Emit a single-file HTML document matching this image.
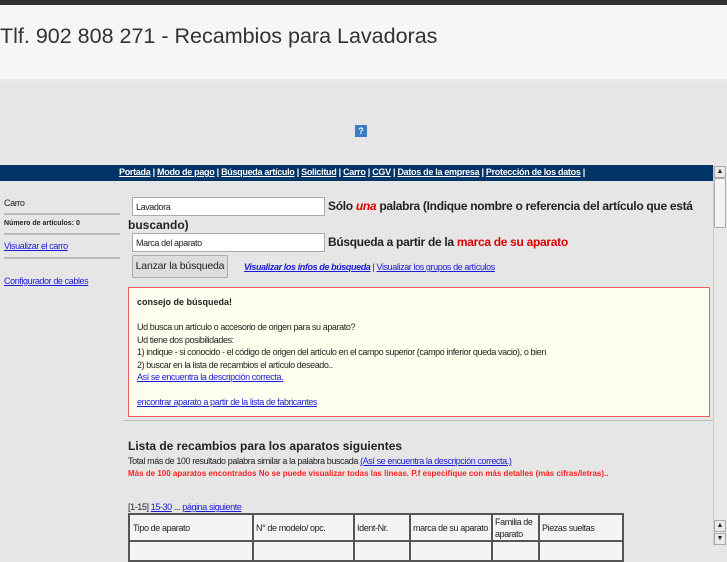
<!DOCTYPE html>
<html><head><meta charset="utf-8"><style>
*{margin:0;padding:0;box-sizing:border-box}
body{width:727px;height:545px;overflow:hidden;background:#e6e6e6;font-family:"Liberation Sans",sans-serif;color:#222;position:relative}
.a{position:absolute}
a{color:#1a1ad8;text-decoration:underline}
.s{font-size:9px;letter-spacing:-0.4px}
td{white-space:nowrap;overflow:hidden}
</style></head><body>
<div class="a" style="left:0;top:0;width:727px;height:5px;background:#333"></div>
<div class="a" style="left:0;top:5px;width:727px;height:76px;background:#f6f6f6;border-bottom:2px solid #ececec"></div>
<div class="a" style="left:0;top:24px;font-size:21.5px;color:#333">Tlf. 902 808 271 - Recambios para Lavadoras</div>
<div class="a" style="left:355px;top:125px;width:12px;height:12px;background:#3a7cc8;color:#fff;font-size:9px;text-align:center;line-height:12px;font-weight:bold">?</div>
<div class="a" style="left:0;top:165px;width:713px;height:16px;background:#003366"></div>
<div class="a" style="left:119px;top:167px;font-size:9px;color:#fff;font-weight:bold;letter-spacing:-0.3px;white-space:nowrap">
<a style="color:#fff">Portada</a> | <a style="color:#fff">Modo de pago</a> | <a style="color:#fff">Búsqueda artículo</a> | <a style="color:#fff">Solicitud</a> | <a style="color:#fff">Carro</a> | <a style="color:#fff">CGV</a> | <a style="color:#fff">Datos de la empresa</a> | <a style="color:#fff">Protección de los datos</a> |</div>
<div class="a" style="left:713px;top:165px;width:14px;height:380px;background:#e8e8e8;border-left:1px solid #ccc"></div>
<div class="a" style="left:714px;top:178px;width:12px;height:50px;background:#f4f4f4;border:1px solid #aaa;border-radius:2px"></div>
<div class="a" style="left:714px;top:166px;width:12px;height:12px;border:1px solid #aaa;font-size:7px;text-align:center;line-height:10px">▲</div>
<div class="a" style="left:714px;top:520px;width:12px;height:12px;border:1px solid #aaa;font-size:7px;text-align:center;line-height:10px">▲</div>
<div class="a" style="left:714px;top:533px;width:12px;height:12px;border:1px solid #aaa;font-size:7px;text-align:center;line-height:10px">▼</div>
<div class="a s" style="left:4px;top:198px;font-size:9px">Carro</div>
<div class="a" style="left:4px;top:213px;width:116px;height:2px;background:#bbb"></div>
<div class="a" style="left:4px;top:220px;font-size:7px;font-weight:bold">Número de artículos: 0</div>
<div class="a" style="left:4px;top:233px;width:116px;height:2px;background:#bbb"></div>
<div class="a s" style="left:4px;top:241px"><a>Visualizar el carro</a></div>
<div class="a" style="left:4px;top:257px;width:116px;height:2px;background:#bbb"></div>
<div class="a s" style="left:4px;top:276px"><a>Configurador de cables </a></div>
<div class="a s" style="left:132px;top:197px;width:193px;height:19px;background:#fff;border:1px solid #aaa;padding:4px 3px;font-size:9px">Lavadora</div>
<div class="a" style="left:328px;top:197px;font-size:12px;font-weight:bold;width:385px;line-height:19px;letter-spacing:-0.3px;white-space:nowrap">Sólo <i style="color:#d00">una</i> palabra (Indique nombre o referencia del artículo que está</div>
<div class="a" style="left:128px;top:217px;font-size:12px;font-weight:bold;line-height:17px">buscando)</div>
<div class="a s" style="left:132px;top:233px;width:193px;height:19px;background:#fff;border:1px solid #aaa;padding:4px 3px;font-size:9px">Marca del aparato</div>
<div class="a" style="left:328px;top:235px;font-size:12px;font-weight:bold;letter-spacing:-0.3px;white-space:nowrap">Búsqueda a partir de la <span style="color:#d00">marca de su aparato</span></div>
<div class="a" style="left:132px;top:255px;width:96px;height:23px;background:#ddd;border:1px solid #aaa;border-radius:2px;font-size:10.5px;text-align:center;line-height:21px;white-space:nowrap;letter-spacing:-0.2px">Lanzar la búsqueda</div>
<div class="a s" style="left:244px;top:262px;white-space:nowrap"><a style="font-weight:bold;font-style:italic">Visualizar los infos de búsqueda</a> | <a>Visualizar los grupos de artículos</a></div>
<div class="a s" style="left:128px;top:287px;width:582px;height:130px;background:#fffff0;border:1px solid #f06060;padding:8px 8px;font-size:9px;line-height:12.5px">
<b style="letter-spacing:0">consejo de búsqueda!</b><br><br>
Ud busca un artículo o accesorio de origen para su aparato?<br>
Ud tiene dos posibilidades:<br>
1) indique - si conocido - el código de origen del artículo en el campo superior (campo inferior queda vacio), o bien<br>
2) buscar en la lista de recambios el artículo deseado..<br>
<a>Así se encuentra la descripción correcta.</a><br><br>
<a>encontrar aparato a partir de la lista de fabricantes</a></div>
<div class="a" style="left:123px;top:420px;width:590px;height:1px;background:#bbb"></div>
<div class="a" style="left:128px;top:439px;font-size:12px;font-weight:bold">Lista de recambios para los aparatos siguientes</div>
<div class="a s" style="left:128px;top:456px;white-space:nowrap">Total más de 100 resultado palabra similar a la palabra buscada <a>(Así se encuentra la descripción correcta.)</a></div>
<div class="a" style="left:128px;top:469px;font-size:8px;font-weight:bold;color:#f22;white-space:nowrap">Más de 100 aparatos encontrados No se puede visualizar todas las lineas. P.f especifique con más detalles (más cifras/letras)..</div>
<div class="a s" style="left:128px;top:502px;white-space:nowrap">[1-15] <a>15-30</a> ... <a>página siguiente</a></div>
<table class="a s" style="left:128px;top:513px;width:496px;border-collapse:collapse;background:#f4f4f4;font-size:9px;table-layout:fixed">
<colgroup><col style="width:124px"><col style="width:101px"><col style="width:56px"><col style="width:82px"><col style="width:47px"><col></colgroup>
<tr style="height:27px"><td style="border:2px solid #555;padding-left:3px">Tipo de aparato</td><td style="border:2px solid #555;padding-left:2px">N° de modelo/ opc.</td><td style="border:2px solid #555;padding-left:2px">Ident-Nr.</td><td style="border:2px solid #555;padding-left:2px">marca de su aparato</td><td style="border:2px solid #555;padding-left:2px;line-height:12px;white-space:normal">Familia de aparato</td><td style="border:2px solid #555;padding-left:2px">Piezas sueltas</td></tr>
<tr style="height:20px"><td style="border:2px solid #555"></td><td style="border:2px solid #555"></td><td style="border:2px solid #555"></td><td style="border:2px solid #555"></td><td style="border:2px solid #555"></td><td style="border:2px solid #555"></td></tr>
</table>
</body></html>
